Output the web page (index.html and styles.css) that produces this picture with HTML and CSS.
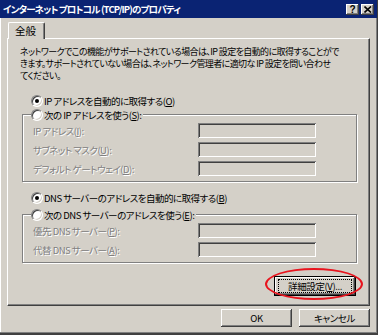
FILE: index.html
```html
<!DOCTYPE html>
<html lang="ja">
<head>
    <meta charset="UTF-8">
    <title>インターネット プロトコル (TCP/IP)のプロパティ</title>
    <link rel="stylesheet" href="styles.css">
</head>
<body>
    <div class="window">
        <div class="titlebar">
            <span class="title">インターネット プロトコル (TCP/IP)のプロパティ</span>
            <div class="caption-buttons">
                <span class="cap-btn help">?</span>
                <span class="cap-btn">
                    <svg width="8" height="7" viewBox="0 0 8 7">
                        <path d="M0.5 0.5 L7 6.5 M7 0.5 L0.5 6.5" stroke="#000" stroke-width="1.6" fill="none"/>
                    </svg>
                </span>
            </div>
        </div>

        <div class="client">
            <div class="tabs">
                <div class="tab active">全般</div>
            </div>

            <div class="panel">
                <p class="intro">ネットワークでこの機能がサポートされている場合は、IP 設定を自動的に取得することがで<br>きます。サポートされていない場合は、ネットワーク管理者に適切な IP 設定を問い合わせ<br>てください。</p>

                <div class="option first"><span class="radio checked"></span>IP アドレスを自動的に取得する(<u>O</u>)</div>

                <fieldset class="group">
                    <legend><span class="option"><span class="radio"></span>次の IP アドレスを使う(<u>S</u>):</span></legend>
                    <div class="field"><span class="field-label">IP アドレス(<u>I</u>):</span><span class="textbox"></span></div>
                    <div class="field"><span class="field-label">サブネット マスク(<u>U</u>):</span><span class="textbox"></span></div>
                    <div class="field"><span class="field-label">デフォルト ゲートウェイ(<u>D</u>):</span><span class="textbox"></span></div>
                </fieldset>

                <div class="option dns"><span class="radio checked"></span>DNS サーバーのアドレスを自動的に取得する(<u>B</u>)</div>

                <fieldset class="group group-dns">
                    <legend><span class="option"><span class="radio"></span>次の DNS サーバーのアドレスを使う(<u>E</u>):</span></legend>
                    <div class="field"><span class="field-label">優先 DNS サーバー(<u>P</u>):</span><span class="textbox"></span></div>
                    <div class="field"><span class="field-label">代替 DNS サーバー(<u>A</u>):</span><span class="textbox"></span></div>
                </fieldset>

                <div class="advanced-row">
                    <div class="advanced">
                        <button class="btn default"><span class="focus">詳細設定(<u>V</u>)...</span></button>
                        <span class="mark"></span>
                    </div>
                </div>
            </div>

            <div class="dialog-buttons">
                <button class="btn">OK</button>
                <button class="btn">キャンセル</button>
            </div>
        </div>
    </div>
</body>
</html>
```

FILE: styles.css
```css
body {
    margin: 0;
    padding: 0;
    background: #d4d0c8;
    font-family: "Noto Sans CJK JP", "Noto Sans", sans-serif;
    font-size: 9.5px;
    font-feature-settings: "palt";
    color: #000;
}

.window {
    width: 378px;
    height: 335px;
    box-sizing: border-box;
    background: #d4d0c8;
    border-right: 1px solid #404040;
    border-bottom: 2px solid #404040;
    box-shadow: inset -1px -1px #808080, inset 1px 0 #fff;
    overflow: hidden;
}

/* barra del titolo */
.titlebar {
    height: 18px;
    display: flex;
    align-items: center;
    justify-content: space-between;
    background: #0a2373;
    color: #fff;
    padding: 0 3px 0 3px;
}

.title {
    font-weight: bold;
    font-size: 9.5px;
    letter-spacing: -0.85px;
    white-space: nowrap;
}

.caption-buttons {
    display: flex;
    gap: 2px;
    margin-top: 1px;
}

.cap-btn {
    width: 13px;
    height: 11px;
    display: flex;
    align-items: center;
    justify-content: center;
    background: #d4d0c8;
    color: #000;
    box-shadow: inset -1px -1px #404040, inset 1px 1px #fff, inset -2px -2px #808080;
}

.cap-btn.help {
    font-family: "Liberation Sans", sans-serif;
    font-weight: bold;
    font-size: 10px;
    line-height: 11px;
}

/* contenuto */
.client {
    padding: 4px 7px 0 7px;
}

.tabs {
    display: flex;
    padding-left: 1px;
    height: 16px;
}

.tab {
    position: relative;
    z-index: 1;
    width: 37px;
    height: 17px;
    box-sizing: border-box;
    background: #d4d0c8;
    border-top: 1px solid #fff;
    border-left: 1px solid #fff;
    border-right: 1px solid #404040;
    border-radius: 2px 2px 0 0;
    box-shadow: inset -1px 0 #808080;
    text-align: center;
    font-size: 10.5px;
    line-height: 15px;
    padding-right: 2px;
}

.panel {
    height: 268px;
    box-sizing: border-box;
    border-top: 1px solid #fff;
    border-left: 1px solid #fff;
    border-right: 1px solid #404040;
    border-bottom: 1px solid #404040;
    box-shadow: inset -1px -1px #808080;
    padding: 7px 12px 0 12px;
}

.intro {
    margin: 0;
    font-size: 9px;
    line-height: 12px;
    white-space: nowrap;
    letter-spacing: -0.6px;
}

.option {
    display: flex;
    align-items: center;
    height: 13px;
    white-space: nowrap;
    letter-spacing: -0.5px;
}

.option.first {
    margin-top: 12px;
    padding-left: 11px;
}

.option.dns {
    margin-top: 9px;
    padding-left: 11px;
}

.radio {
    width: 12px;
    height: 12px;
    box-sizing: border-box;
    border-radius: 50%;
    background: #fff;
    border: 1px solid;
    border-color: #808080 #fff #fff #808080;
    box-shadow: inset 1px 1px #404040, inset -1px -1px #d4d0c8;
    margin-right: 1px;
    display: flex;
    align-items: center;
    justify-content: center;
}

.radio.checked::after {
    content: '';
    width: 4px;
    height: 4px;
    border-radius: 50%;
    background: #000;
}

.group {
    margin: 1px 0 0 2px;
    padding: 2px 40px 5px 8px;
    border: 1px solid #808080;
    box-shadow: 1px 1px #fff, inset 1px 1px #fff;
    min-width: 0;
}

.group legend {
    padding: 0 2px 0 0;
    background: #d4d0c8;
}

.group-dns {
    margin-top: 4px;
}

.field {
    display: flex;
    align-items: center;
    justify-content: space-between;
    height: 15px;
    margin-top: 4px;
}

.field:first-of-type {
    margin-top: 0;
}

.field-label {
    color: #808080;
    text-shadow: 1px 1px #fff;
    padding-left: 2px;
    letter-spacing: -0.5px;
    white-space: nowrap;
}

.textbox {
    width: 118px;
    height: 15px;
    box-sizing: border-box;
    background: #d4d0c8;
    box-shadow: inset 1px 1px #808080, inset -1px -1px #fff, inset 2px 2px #404040, inset -2px -2px #d4d0c8;
}

/* pulsanti */
.btn {
    font-family: inherit;
    font-size: 9.5px;
    font-feature-settings: "palt";
    color: #000;
    background: #d4d0c8;
    border: none;
    padding: 0;
    margin: 0;
    box-shadow: inset -1px -1px #404040, inset 1px 1px #fff, inset -2px -2px #808080;
    display: flex;
    align-items: center;
    justify-content: center;
    letter-spacing: -0.4px;
}

.advanced-row {
    display: flex;
    justify-content: flex-end;
    margin-top: 13px;
    padding-right: 1px;
}

.advanced {
    position: relative;
}

.btn.default {
    width: 82px;
    height: 20px;
    box-sizing: border-box;
    border: 1px solid #000;
}

.focus {
    display: flex;
    align-items: center;
    justify-content: center;
    width: 72px;
    height: 12px;
    outline: 1px dotted #000;
}

.mark {
    position: absolute;
    left: -9px;
    top: -8px;
    right: -7px;
    bottom: -4px;
    border: 2px solid #e8141e;
    border-radius: 50%;
    pointer-events: none;
}

.dialog-buttons {
    display: flex;
    justify-content: flex-end;
    gap: 7px;
    margin-top: 3px;
}

.dialog-buttons .btn {
    width: 71px;
    height: 18px;
}
```
